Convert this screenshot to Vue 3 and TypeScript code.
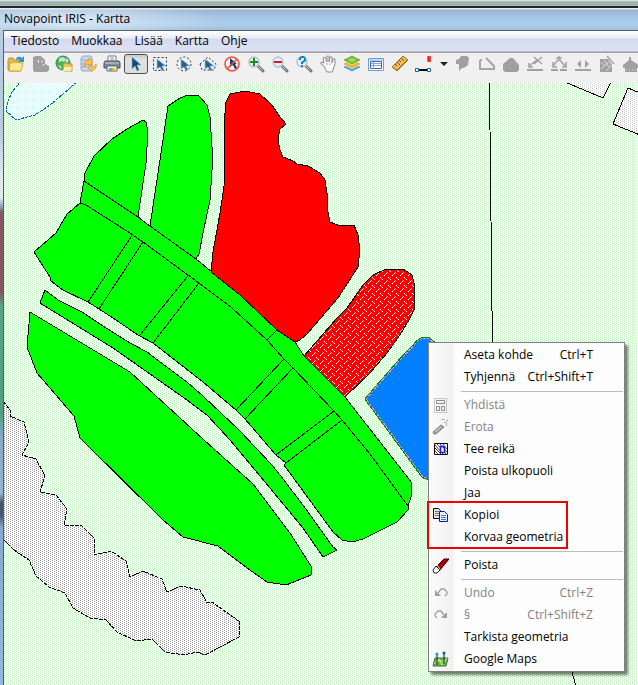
<script setup lang="ts">
interface Tool {
  id: string
  label: string
  icon: string
  pressed?: boolean
  disabled?: boolean
}

interface MenuEntry {
  label: string
  shortcut?: string
  icon?: string
  disabled?: boolean
  divider?: boolean
}

const cursor = '<path d="M5 2v12l3-3 2 5 2-1-2-5h4z" fill="#134c78" stroke="#7fb6dc" stroke-width=".6"/>'
const smallCursor = '<path d="M6 4v10l3-2 2 4 2-1-2-4h4z" fill="#2a5f8a" stroke="#9cc4e0" stroke-width=".8"/>'
const lens = '<path d="M11 11l5 5" stroke="#777" stroke-width="3" stroke-linecap="round"/><path d="M11 11l4 4" stroke="#c9c9c9" stroke-width="1"/><circle cx="7" cy="7" r="5" fill="#e3f0f8" stroke="#b4c2cc" stroke-width="1.4"/>'

const icons: Record<string, string> = {
  open: '<path d="M1 5l1-2h4l1 2h6v11H2L1 15z" fill="#e3b845" stroke="#bf9226"/><path d="M3 8h13l-2 8H2z" fill="#ffe78c" stroke="#cfa53c"/><path d="M4 9h10" stroke="#fff8cf"/><path d="M9 5c0-4 4-4 6-2l2-2v6h-6l2-2c-1-1-2-1-4 0z" fill="#2b93cf"/>',
  blob: '<path d="M2 2l3-1h5l4 4v4l4 2v4l-2 2H3l-1-2z" fill="#a0a0a0"/><path d="M7 5h1v3H7zM10 6h2v1h-2zM12 9h1v2h-1z" fill="#ececec"/>',
  globe: '<circle cx="8" cy="8" r="7" fill="#4cae46" stroke="#36903a"/><path d="M4 3l4-1 3 2-2 3-3-1-2 2zM3 10l3 1 1 3-2-1zM12 3l2 3-2 2-2-2z" fill="#b7e2f1"/><path d="M8 10l1-2h3l1 1h4v7H9z" fill="#e8c464" stroke="#b9933b"/><path d="M9 12h8l-1 4H8z" fill="#fff0a5"/>',
  sync: '<path d="M2 3l2-2h8l1 2v11l-2 2H3l-1-2z" fill="#c6d8ee" stroke="#8fabce"/><path d="M2 5h11M2 9h8M2 12h8" stroke="#8dacd4"/><path d="M5 12c0-5 2-7 5-7V3l4 4-4 4V9c-2 0-3 1-5 3z" fill="#ffc04d" stroke="#dd8a2e" stroke-width=".7"/><path d="M17 9c1 5-2 6-4 6v2l-4-4 4-4v3c2 0 3-1 4-3z" fill="#ffc556" stroke="#dd8a2e" stroke-width=".7"/>',
  printer: '<path d="M5 1h8v6H5z" fill="#fff" stroke="#7a7f8c"/><path d="M7 3h4M7 5h4" stroke="#7f9bc4"/><path d="M2 6h14l1 2v5H1V8z" fill="#7f858e" stroke="#50555e"/><path d="M2 8h14" stroke="#d8dce0"/><path d="M4 11h10v5H4z" fill="#f3f3f3" stroke="#666"/><path d="M6 13h3v3H6z" fill="#48b7c8"/><path d="M9 13h3v3H9z" fill="#d8b649"/><path d="M10 9h5" stroke="#43c96a"/>',
  select: cursor,
  rectSelect: '<path d="M2.500 2.500h13v13h-13z" fill="none" stroke="#333" stroke-dasharray="2 2"/>' + smallCursor,
  circleSelect: '<circle cx="9" cy="9" r="7" fill="none" stroke="#333" stroke-dasharray="2 2"/>' + smallCursor,
  polySelect: '<path d="M1 9l8-7 8 7-2 6H3z" fill="none" stroke="#333" stroke-dasharray="2 2"/>' + smallCursor,
  noSelect: '<path d="M7 3v9l3-2 2 4 2-1-2-4h2z" fill="#123e68"/><circle cx="9" cy="9" r="7" fill="none" stroke="#f0503e" stroke-width="1.600"/><path d="M4 14L14 4" stroke="#f0503e" stroke-width="1.600"/>',
  zoomIn: lens + '<path d="M6 3h2v3h3v2H8v3H6V8H3V6h3z" fill="#198a1d"/>',
  zoomOut: lens + '<path d="M3 6h8v2H3z" fill="#d91828"/>',
  zoomHelp: lens + '<path d="M4 5V3l2-2h3l2 2v3L8 8v1H6V7l3-2V3H6v2zM6 10h2v2H6z" fill="#1385c4"/>',
  hand: '<path d="M5 11L2 9V7l3 1-1-5 2-1 2 5 0-6h2v6l1-5h2l0 6 1-4h2v5l-2 6-1 2H8z" fill="#fafafa" stroke="#8b8b8b"/><path d="M8 8v2M11 8v2" stroke="#aaa"/>',
  layers: '<path d="M1 12l8-4 8 4-8 4z" fill="#49b2d7" stroke="#268eb5" stroke-width=".6"/><path d="M1 10l8-4 8 4-8 4z" fill="#f3f7f8"/><path d="M1 9l8-4 8 4-8 4z" fill="#f1b62a" stroke="#d79519" stroke-width=".5"/><path d="M1 6l8-4 8 4-8 4z" fill="#fff6c7"/><path d="M1 5l8-4 8 4-8 4z" fill="#7bc335" stroke="#50981e" stroke-width=".6"/><path d="M5 5l4-2 4 2-4 2z" fill="#a7df5b"/>',
  table: '<path d="M1.500 3.500h15v12h-15z" fill="#fff" stroke="#6fa2c5"/><path d="M2 4h14v2H2z" fill="#b7d9ed"/><path d="M3.500 6.500h11v7h-11z" fill="#fff" stroke="#3c67b4"/><path d="M4 8.500h10M4 10.500h10M6.500 7v7" stroke="#86a4d6"/>',
  ruler: '<path d="M1 12L12 1l5 4L6 16z" fill="#eebc52" stroke="#a56e21"/><path d="M4 9l2 2M6 7l3 3M8 5l2 2M10 3l3 3" stroke="#815414"/><path d="M3 13l3 2 10-10" fill="none" stroke="#bd812b"/>',
  edge: '<path d="M1 15h14" stroke="#000" stroke-width="2"/><path d="M.500 13.500h3v3h-3zM12.500 13.500h3v3h-3z" fill="#fff" stroke="#006b9c"/><path d="M16 2h-3v4h3M13 4h3" fill="none" stroke="#f00" stroke-width="1.300"/>',
  pin: '<path d="M5 4l2-3h6l2 2-1 7-4 3H8l-3 3V9H2V5z" fill="#a0a0a0"/>',
  bend: '<path d="M2 5v9h14v-3L8 3M2 5h2" fill="none" stroke="#a6a6a6" stroke-width="2"/>',
  fillShape: '<path d="M1 15V9l7-6h3l6 7v5l-2 2H3z" fill="#a0a0a0"/>',
  cut: '<path d="M1 15h16" stroke="#a0a0a0" stroke-width="2"/><path d="M3 11l8-6M8 2l8 7M16 2L8 9M3 8v4h4" fill="none" stroke="#a0a0a0" stroke-width="1.500"/>',
  join: '<path d="M1 15h16" stroke="#a0a0a0" stroke-width="2" stroke-dasharray="7 2"/><path d="M3 11l5-6M10 5l5 6M3 7v5h4M12 12h4V7M6 3h6M9 1v5" fill="none" stroke="#a0a0a0" stroke-width="1.500"/>',
  flip: '<path d="M1 15h16" stroke="#a0a0a0" stroke-width="2"/><path d="M7 5v8L3 9zM11 5v8l4-4z" fill="#a0a0a0"/>',
  hatch: '<path d="M2 4h8l4 6v7H2z" fill="#a0a0a0"/><path d="M3 7l4 4M6 5l6 8M3 14l8-7M8 16l6-6" stroke="#dedede"/><path d="M9 1l7 8" stroke="#a0a0a0" stroke-width="1.500"/>',
  house: '<path d="M1 10l6-5V2h2v3l8 5v3h-2v4H3v-4H1z" fill="#a0a0a0"/><path d="M4 15h11" stroke="#dedede" stroke-dasharray="1 2"/>',
  merge: '<path d="M2.500 2.500h12v14h-12z" fill="none" stroke="#999" stroke-dasharray="1 1"/><path d="M4.500 4.500h8v3h-8zM4.500 10.500h3v4h-3zM9.500 10.500h3v4h-3z" fill="#f4f4f4" stroke="#8a8a8a"/>',
  wand: '<path d="M1 14l8-7 3 2-8 7H2z" fill="#a0a0a0" stroke="#858585"/><path d="M3 14l6-5" stroke="#ddd"/><path d="M10 1v2M12 5l4-3M14 7h2M12 2V1M14 5h2" stroke="#777" stroke-dasharray="1 1"/>',
  hole: '<path d="M2.500 3.500h13v11h-13z" fill="#fff" stroke="#000"/><path d="M3 5l8 9M3 8l6 6M3 11l3 3M5 4l9 10M8 4l7 8M11 4l4 5" stroke="#902020"/><path d="M8.500 6.500h3v1h1v5h-4z" fill="#fff" stroke="#0022ee" stroke-width="1.500"/>',
  copy: '<path d="M1.500 2.500h5l2 2v8h-7z" fill="#e4e4e4" stroke="#000"/><path d="M3 5.500h4M3 7.500h4M3 9.500h4" stroke="#777"/><path d="M7.500 5.500h5l3 3v7h-8z" fill="#e8f0ff" stroke="#0018cc"/><path d="M9 9.500h5M9 11.500h5M9 13.500h5" stroke="#4c72d1"/>',
  eraser: '<path d="M5 10l7-7h5l-9 11z" fill="#d90000" stroke="#400"/><path d="M13 3l-7 8M15 4l-8 9" stroke="#500"/><path d="M5 9l3 4" stroke="#df7"/><path d="M4 10l4 4-3 3H2l-1-3z" fill="#fff" stroke="#222"/>',
  undo: '<path d="M3 6v6h6z" fill="#a0a0a0"/><path d="M6 9l3-4h3l3 3v2l-2 2" fill="none" stroke="#a0a0a0" stroke-width="1.300"/>',
  redo: '<path d="M15 6v6H9z" fill="#a0a0a0"/><path d="M12 9L9 5H6L3 8v2l2 2" fill="none" stroke="#a0a0a0" stroke-width="1.300"/>',
  maps: '<path d="M3 8h13l-2 8H1z" fill="#6db943" stroke="#347922"/><path d="M2 14l5-5 3 6 5-7M4 11h10" fill="none" stroke="#d5e895"/><path d="M5 4v11M12 3v11" stroke="#254d5d" stroke-width="1.300"/><circle cx="5" cy="4" r="1.600" fill="#359ac5"/><circle cx="12" cy="3" r="1.600" fill="#17688f"/>',
}

const menuBar = ['Tiedosto', 'Muokkaa', 'Lisää', 'Kartta', 'Ohje']

const tools: Tool[] = [
  { id: 'open', label: 'Avaa', icon: 'open' },
  { id: 'save', label: 'Tallenna', icon: 'blob', disabled: true },
  { id: 'web', label: 'Avaa verkosta', icon: 'globe' },
  { id: 'sync', label: 'Päivitä', icon: 'sync' },
  { id: 'print', label: 'Tulosta', icon: 'printer' },
  { id: 'select', label: 'Valitse', icon: 'select', pressed: true },
  { id: 'rect', label: 'Valitse suorakaiteella', icon: 'rectSelect' },
  { id: 'circle', label: 'Valitse ympyrällä', icon: 'circleSelect' },
  { id: 'poly', label: 'Valitse monikulmiolla', icon: 'polySelect' },
  { id: 'none', label: 'Poista valinta', icon: 'noSelect' },
  { id: 'in', label: 'Lähennä', icon: 'zoomIn' },
  { id: 'out', label: 'Loitonna', icon: 'zoomOut' },
  { id: 'find', label: 'Kohdista', icon: 'zoomHelp' },
  { id: 'pan', label: 'Siirrä', icon: 'hand' },
  { id: 'layers', label: 'Tasot', icon: 'layers' },
  { id: 'table', label: 'Taulukko', icon: 'table' },
  { id: 'measure', label: 'Mittaa', icon: 'ruler' },
  { id: 'edge', label: 'Viiva', icon: 'edge' },
]

const editTools: Tool[] = [
  { id: 'pin', label: 'Piste', icon: 'pin', disabled: true },
  { id: 'bend', label: 'Murtoviiva', icon: 'bend', disabled: true },
  { id: 'area', label: 'Alue', icon: 'fillShape', disabled: true },
  { id: 'cut', label: 'Katkaise', icon: 'cut', disabled: true },
  { id: 'join', label: 'Liitä', icon: 'join', disabled: true },
  { id: 'flip', label: 'Käännä', icon: 'flip', disabled: true },
  { id: 'hatch', label: 'Rasteri', icon: 'hatch', disabled: true },
  { id: 'house', label: 'Rakennus', icon: 'house', disabled: true },
]

const contextMenu: MenuEntry[] = [
  { label: 'Aseta kohde', shortcut: 'Ctrl+T' },
  { label: 'Tyhjennä', shortcut: 'Ctrl+Shift+T' },
  { label: 'Yhdistä', icon: 'merge', disabled: true, divider: true },
  { label: 'Erota', icon: 'wand', disabled: true },
  { label: 'Tee reikä', icon: 'hole' },
  { label: 'Poista ulkopuoli' },
  { label: 'Jaa' },
  { label: 'Kopioi', icon: 'copy' },
  { label: 'Korvaa geometria' },
  { label: 'Poista', icon: 'eraser', divider: true },
  { label: 'Undo', shortcut: 'Ctrl+Z', icon: 'undo', disabled: true, divider: true },
  { label: '§', shortcut: 'Ctrl+Shift+Z', icon: 'redo', disabled: true },
  { label: 'Tarkista geometria' },
  { label: 'Google Maps', icon: 'maps' },
]

const greenAreas = [
  '84,181 85,173 94,156 112,139 127,129 143,120 146,122 148,132 146,163 138,217',
  '150,226 160,160 168,106 180,98 188,95 199,96 207,105 210,117 212,147 212,170 210,200 203,233 199,254 196,259',
  '80,203 67,214 56,233 34,252 50,277 51,281 63,290 88,302 99,309 113,318 138,335 153,343 203,382 236,410 245,419 276,455 286,463 284,465 333,532 342,540 352,542 363,539 397,522 408,510 408,506 370,454 342,420 334,411 293,368 284,359 267,340 232,308 199,283 188,275 143,242 130,233 86,205',
  '84,181 138,217 150,226 196,259 212,272 240,295 277,330 295,342 304,356 345,397 412,483 411,497 408,506 370,454 342,420 334,411 293,368 284,359 267,340 232,308 199,283 188,275 143,242 130,233 86,205 80,203',
  '45,290 58,300 82,312 103,326 130,343 147,352 187,382 203,396 240,431 272,465 280,475 303,505 333,547 337,550 323,557 303,528 265,482 230,440 207,415 187,400 113,348 40,303',
  '30,312 27,347 37,373 74,416 80,438 163,520 183,537 218,546 247,568 267,582 286,585 311,575 311,566 290,533 253,484 204,440 130,372',
]

const innerLines = [
  '131,233 131,237 88,302',
  '143,242 99,309',
  '188,275 187,277 140,335',
  '199,283 153,343',
  '284,359 236,410',
  '293,368 245,419',
  '334,411 276,455',
  '342,420 286,463',
  '277,330 267,340',
]

const redArea =
  '211,272 213,252 220,213 224,187 225,113 226,102 230,94 245,91 260,94 272,105 280,117 286,124 280,129 278,140 280,150 283,157 293,161 297,164 308,166 320,173 325,180 327,193 327,207 330,222 340,226 354,225 358,235 360,250 358,267 338,298 308,333 300,340 295,342 277,330 240,295'
const hatchedArea =
  '304,356 337,318 347,308 363,285 373,275 386,269 403,269 412,275 414,283 414,310 410,318 400,335 387,353 370,373 345,397'
const selectedArea = '366,399 400,360 418,341 423,338 428,338 434,343 470,400 436,474 429,479 423,477'
const greyArea =
  '3,401 10,410 10,416 24,422 29,442 22,455 36,459 45,476 40,492 56,495 67,509 64,525 82,526 94,538 94,555 111,551 126,561 130,577 143,571 162,579 167,592 181,586 200,590 207,603 212,602 240,622 239,637 205,655 197,652 184,655 165,652 152,639 136,641 117,632 106,620 90,618 73,608 65,593 49,587 36,576 29,560 14,550 3,539'
</script>

<template>
  <div class="desktop">
    <div class="backdrop"></div>
    <main class="window">
      <header class="titlebar"><h1>Novapoint IRIS - Kartta</h1></header>

      <nav class="menubar" aria-label="Valikko">
        <button v-for="name in menuBar" :key="name" type="button">{{ name }}</button>
      </nav>

      <div class="toolbar" role="toolbar" aria-label="Työkalut">
        <button
          v-for="tool in tools"
          :key="tool.id"
          type="button"
          class="tool"
          :class="{ pressed: tool.pressed }"
          :disabled="tool.disabled"
          :aria-label="tool.label"
        >
          <svg viewBox="0 0 18 18" v-html="icons[tool.icon]"></svg>
        </button>
        <button type="button" class="drop" aria-label="Viivatyypit">
          <svg viewBox="0 0 8 4"><path d="M0 0h8L4 4z" fill="#222" /></svg>
        </button>
        <button
          v-for="tool in editTools"
          :key="tool.id"
          type="button"
          class="tool"
          :disabled="tool.disabled"
          :aria-label="tool.label"
        >
          <svg viewBox="0 0 18 18" v-html="icons[tool.icon]"></svg>
        </button>
      </div>

      <section class="map" aria-label="Kartta">
        <svg class="canvas" shape-rendering="crispEdges">
          <defs>
            <pattern id="dots-green" width="4" height="2" patternUnits="userSpaceOnUse">
              <path d="M0 0h1v1H0zM2 1h1v1H2z" fill="#b4f8b4" />
            </pattern>
            <pattern id="dots-grey" width="4" height="2" patternUnits="userSpaceOnUse">
              <path d="M0 0h4v2H0z" fill="#fff" />
              <path d="M0 0h1v1H0zM2 1h1v1H2z" fill="#989898" />
            </pattern>
            <pattern id="dots-light" width="4" height="2" patternUnits="userSpaceOnUse">
              <path d="M0 0h4v2H0z" fill="#fff" />
              <path d="M0 0h1v1H0zM2 1h1v1H2z" fill="#c8c8c8" />
            </pattern>
            <pattern id="dots-cyan" width="4" height="2" patternUnits="userSpaceOnUse">
              <path d="M0 0h4v2H0z" fill="#fff" />
              <path d="M0 0h1v1H0zM2 1h1v1H2z" fill="#ccfcff" />
            </pattern>
            <pattern id="weave" width="8" height="8" patternUnits="userSpaceOnUse">
              <path d="M0 0h8v8H0z" fill="#f00" />
              <path
                d="M0 3h1v1H0zM1 2h1v1H1zM2 1h1v1H2zM3 0h1v1H3zM4 5h1v1H4zM5 6h1v1H5zM6 7h1v1H6z"
                fill="#fff"
              />
            </pattern>
          </defs>
          <rect width="100%" height="100%" fill="url(#dots-green)" />
          <g transform="translate(-4 -83)" stroke="#000" stroke-linejoin="round">
            <polygon
              points="20,82 12,92 8,101 6,111 16,120 35,115 50,105 77,82"
              fill="url(#dots-cyan)"
              stroke="#0060c0"
              stroke-dasharray="3 1"
            />
            <polygon :points="greyArea" fill="url(#dots-grey)" stroke-dasharray="4 1" />
            <polygon points="565,82 603,98 611,82" fill="url(#dots-light)" />
            <polyline points="640,93 628,88 613,124 640,135" fill="url(#dots-light)" />
            <polyline points="489,82 489,98 490,130 493,400 572,672 577,690" fill="none" />
            <polygon v-for="points in greenAreas" :key="points" :points="points" fill="#0f0" />
            <polyline v-for="points in innerLines" :key="points" :points="points" fill="none" />
            <polygon :points="redArea" fill="#f00" />
            <polygon :points="hatchedArea" fill="url(#weave)" />
            <polygon :points="selectedArea" fill="#0080ff" stroke="#108010" stroke-width="3" />
            <polygon :points="selectedArea" fill="#0080ff" stroke="#e090f0" stroke-dasharray="3 1" />
          </g>
        </svg>

        <div class="context">
          <ul class="menu">
            <li v-for="entry in contextMenu" :key="entry.label" :class="{ divided: entry.divider }">
              <button type="button" :disabled="entry.disabled">
                <span class="glyph">
                  <svg v-if="entry.icon" viewBox="0 0 18 18" v-html="icons[entry.icon]"></svg>
                </span>
                <span class="label">{{ entry.label }}</span>
                <span v-if="entry.shortcut" class="shortcut">{{ entry.shortcut }}</span>
              </button>
            </li>
          </ul>
          <div class="marker"></div>
        </div>
      </section>
    </main>
  </div>
</template>

<style>
body {
  margin: 0;
}
</style>

<style scoped>
.desktop {
  display: flex;
  flex-direction: column;
  min-height: 100vh;
  overflow: hidden;
  font: 12px/16px "Open Sans", "Noto Sans", sans-serif;
  color: #000;
}

button {
  margin: 0;
  padding: 0;
  border: 0;
  background: none;
  font: inherit;
  color: inherit;
}

.backdrop {
  flex: none;
  height: 8px;
  box-sizing: border-box;
  border-bottom: 2px solid #252a2b;
  background: linear-gradient(#dcdfdc 0 1px, #8ba6a2 2px, #a9bfba 4px, #8a9c99 5px, #d5dddb 6px);
}

.window {
  flex: 1;
  display: flex;
  flex-direction: column;
  padding-left: 4px;
  background:
    linear-gradient(#4f5d6c, #4f5d6c) 3px 22px / 1px 100% no-repeat,
    linear-gradient(#b8cce1 0, #b8cce1 120px, #e1e8f0 170px, #dfe7ef 190px, #7f98b0 200px, #815761 204px, #815761 284px, #58a589 298px, #4fa080 405px, #86a9cc 430px, #96b4d6 485px, #46566a 495px, #46566a 507px, #86a9d2 520px, #94b8df 100%);
}

.titlebar {
  height: 22px;
  margin-left: -4px;
  padding-left: 4px;
  background:
    radial-gradient(ellipse 150px 22px at 70px 12px, #dbe8f6, transparent),
    linear-gradient(#e5edf5 0 1px, #99b5d1 2px, #a3c3e1 8px, #afcfee 16px, #a1bdd9);
}

h1 {
  margin: 0;
  font-size: 12px;
  font-weight: 400;
  line-height: 22px;
}

.menubar {
  display: flex;
  height: 22px;
  box-sizing: border-box;
  padding-left: 1px;
  border-top: 1px solid #526172;
  border-bottom: 1px solid #b6bdd2;
  background: linear-gradient(#fff, #eaedf7 7px, #d5dbee 8px, #dde3f4);
}

.menubar button {
  padding: 0 6px;
}

.toolbar {
  display: flex;
  align-items: flex-start;
  height: 31px;
  box-sizing: border-box;
  padding-top: 1px;
  border-top: 1px solid #a0a0a0;
  background: #f0f0f0;
  overflow: hidden;
}

.tool {
  flex: none;
  display: grid;
  place-items: center;
  width: 24px;
  height: 20px;
}

.tool svg {
  width: 18px;
  height: 18px;
}

.pressed {
  border: 1px solid #505050;
  border-radius: 3px;
  background: linear-gradient(#c8c8c8, #e0e0e0 4px, #dedede);
}

.drop {
  flex: none;
  display: grid;
  place-items: center;
  width: 15px;
  height: 20px;
}

.drop svg {
  width: 8px;
  height: 4px;
}

.map {
  flex: 1;
  position: relative;
  background: #fff;
}

.canvas {
  position: absolute;
  width: 100%;
  height: 100%;
}

.context {
  position: absolute;
  left: 424px;
  top: 259px;
}

.menu {
  width: 197px;
  box-sizing: border-box;
  margin: 0;
  padding: 1px 1px 1px 0;
  list-style: none;
  border: 1px solid #808080;
  background: linear-gradient(90deg, #fcfcfc, #f1f1f1 24px, #fdfdfd 25px);
  box-shadow: 3px 3px 3px #0008;
}

.divided {
  padding-top: 6px;
  background: linear-gradient(#bdbdbd, #bdbdbd) 32px 3px / 100% 1px no-repeat;
}

.menu button {
  display: flex;
  align-items: center;
  width: 100%;
  height: 22px;
  padding-right: 30px;
  text-align: left;
}

.menu button:disabled {
  color: #838383;
}

.glyph {
  display: grid;
  place-items: center;
  width: 24px;
  margin-right: 11px;
}

.glyph svg {
  width: 18px;
  height: 18px;
}

.label {
  flex: 1;
  white-space: nowrap;
}

.marker {
  position: absolute;
  left: -1px;
  top: 159px;
  width: 141px;
  height: 48px;
  box-sizing: border-box;
  border: 2px solid #f00000;
  pointer-events: none;
}
</style>
